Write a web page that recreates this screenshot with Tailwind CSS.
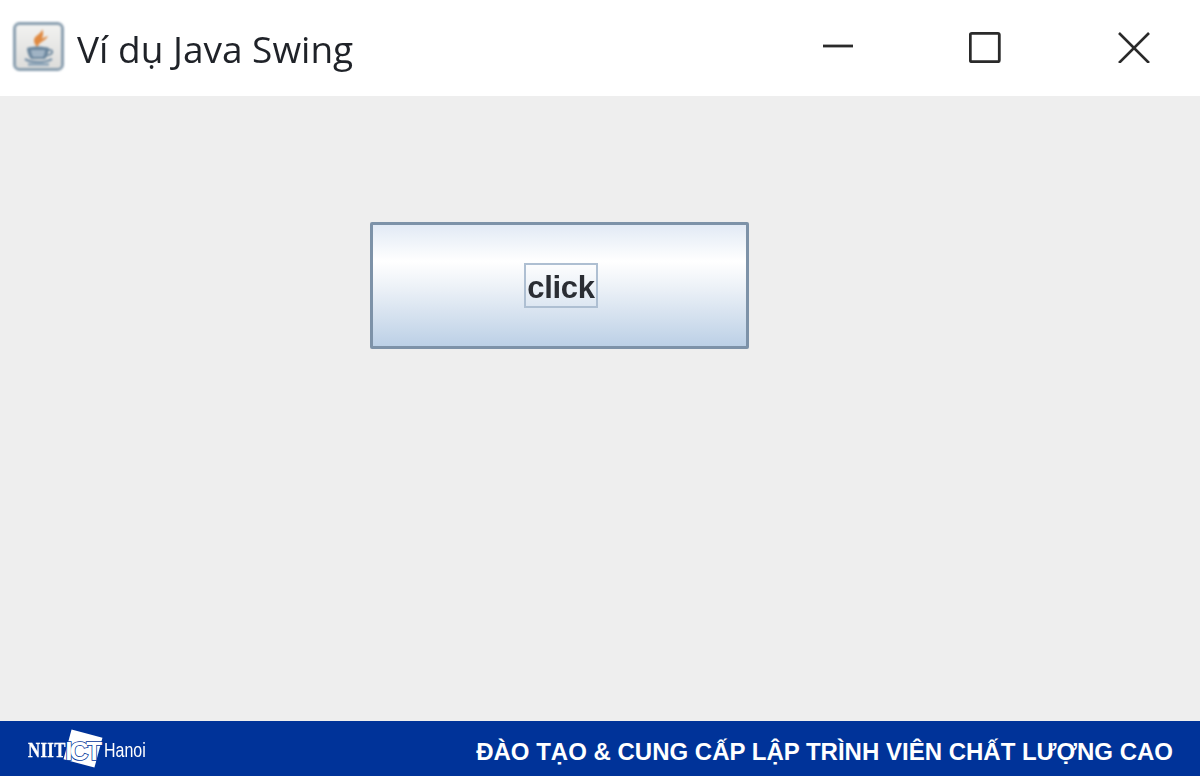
<!DOCTYPE html>
<html>
<head>
<meta charset="utf-8">
<script src="https://cdn.jsdelivr.net/npm/@tailwindcss/browser@4"></script>
</head>
<body class="m-0 overflow-hidden">
<div class="w-[1200px] h-[776px] flex flex-col bg-[#eeeeee]">
  <header class="h-[96px] bg-white flex items-center shrink-0 relative">
    <svg class="ml-[13px] mt-[-4px] shrink-0 blur-[0.9px]" width="51" height="49" viewBox="0 0 51 49">
      <defs>
        <linearGradient id="ib" x1="0" y1="0" x2="0" y2="1"><stop offset="0" stop-color="#f2f2f1"/><stop offset="1" stop-color="#dcdcda"/></linearGradient>
      </defs>
      <rect x="1.5" y="1.5" width="48" height="46" rx="5" fill="url(#ib)" stroke="#8a9fb0" stroke-width="3"/>
      <path d="M29 7c1 4-9 7-8 12 0 2 2 5 4 7-1-3 2-5 5-7 3-2 4-3 5-5-3 1-5 2-6 3 1-3 2-7 0-10z" fill="#e08a42"/>
      <path d="M14 26c6-2 16-2 22 0 0 4-2 9-4 11H18c-2-2-4-7-4-11z" fill="#6c879e"/>
      <path d="M18 28h14c0 3-1 5-2 7H20c-1-2-2-4-2-7z" fill="#a0b3c4"/>
      <path d="M35 28c5-1 6 3 1 5l-3 1" fill="none" stroke="#6c879e" stroke-width="1.8"/>
      <path d="M12 37c6 4 20 4 27 0" fill="none" stroke="#7892a9" stroke-width="2.4"/>
      <path d="M15 42.500h21" stroke="#86a0b5" stroke-width="2.4"/>
    </svg>
    <h1 class="ml-[13px] text-[37px] leading-none font-normal text-[#1f2228] font-['Open_Sans',sans-serif] whitespace-nowrap blur-[0.6px]">Ví dụ Java Swing</h1>
    <div class="ml-auto flex items-center mr-[50px] mt-[-2px] blur-[0.5px]">
      <svg width="32" height="32" viewBox="0 0 32 32" class="mr-[115px]"><path d="M1 15h30" stroke="#2a2a2a" stroke-width="2.8"/></svg>
      <svg width="32" height="32" viewBox="0 0 32 32" class="mr-[117px]"><rect x="1.3" y="2.3" width="29" height="28.4" rx="1.5" fill="none" stroke="#2a2a2a" stroke-width="2.8"/></svg>
      <svg width="32" height="32" viewBox="0 0 32 32"><path d="M1 2L31 32M31 2L1 32" stroke="#2a2a2a" stroke-width="2.6"/></svg>
    </div>
  </header>
  <main class="flex-1 pl-[370px] pt-[126px]">
    <button class="w-[379px] h-[127px] border-[3px] border-[#7d92a8] rounded-[2px] flex items-center justify-center bg-[linear-gradient(to_bottom,#e2eaf5_0%,#ffffff_30%,#e9eff6_55%,#bcd0e6_100%)] blur-[0.5px]">
      <span class="w-[74px] h-[45px] mr-[-3px] pt-[3px] border-[2px] border-[#aebfd2] flex items-center justify-center text-[31px] font-bold leading-none text-[#2a2d33] font-['Liberation_Sans',sans-serif] tracking-[-0.3px]">click</span>
    </button>
  </main>
  <footer class="h-[55px] bg-[#003399] flex items-center shrink-0 text-white">
    <div class="ml-[28px] flex items-center h-full">
      <span class="w-[36px] font-['Liberation_Serif',serif] font-bold text-[21px] leading-none scale-x-[0.8] origin-left mt-[3px] tracking-[0.4px] whitespace-nowrap [-webkit-text-stroke:0.3px_#ffffff]">NIIT</span>
      <span class="relative w-[32px] h-[31px] ml-[3px] mt-[0px] rotate-[15deg] bg-white shrink-0">
        <span class="absolute left-[-3px] top-[5px] w-[38px] text-center font-['Liberation_Sans',sans-serif] font-bold text-[26px] leading-none text-white tracking-[-2.5px] -rotate-[15deg] [-webkit-text-stroke:1.5px_#003399] [paint-order:stroke_fill]">ICT</span>
      </span>
      <span class="w-[41px] ml-[5px] mt-[2px] font-['Liberation_Sans',sans-serif] text-[21px] leading-none scale-x-[0.76] origin-left whitespace-nowrap">Hanoi</span>
    </div>
    <p class="ml-auto mr-[27px] mt-[6px] font-['Liberation_Sans',sans-serif] font-bold text-[24px] leading-none whitespace-nowrap">ĐÀO TẠO &amp; CUNG CẤP LẬP TRÌNH VIÊN CHẤT LƯỢNG CAO</p>
  </footer>
</div>
</body>
</html>
